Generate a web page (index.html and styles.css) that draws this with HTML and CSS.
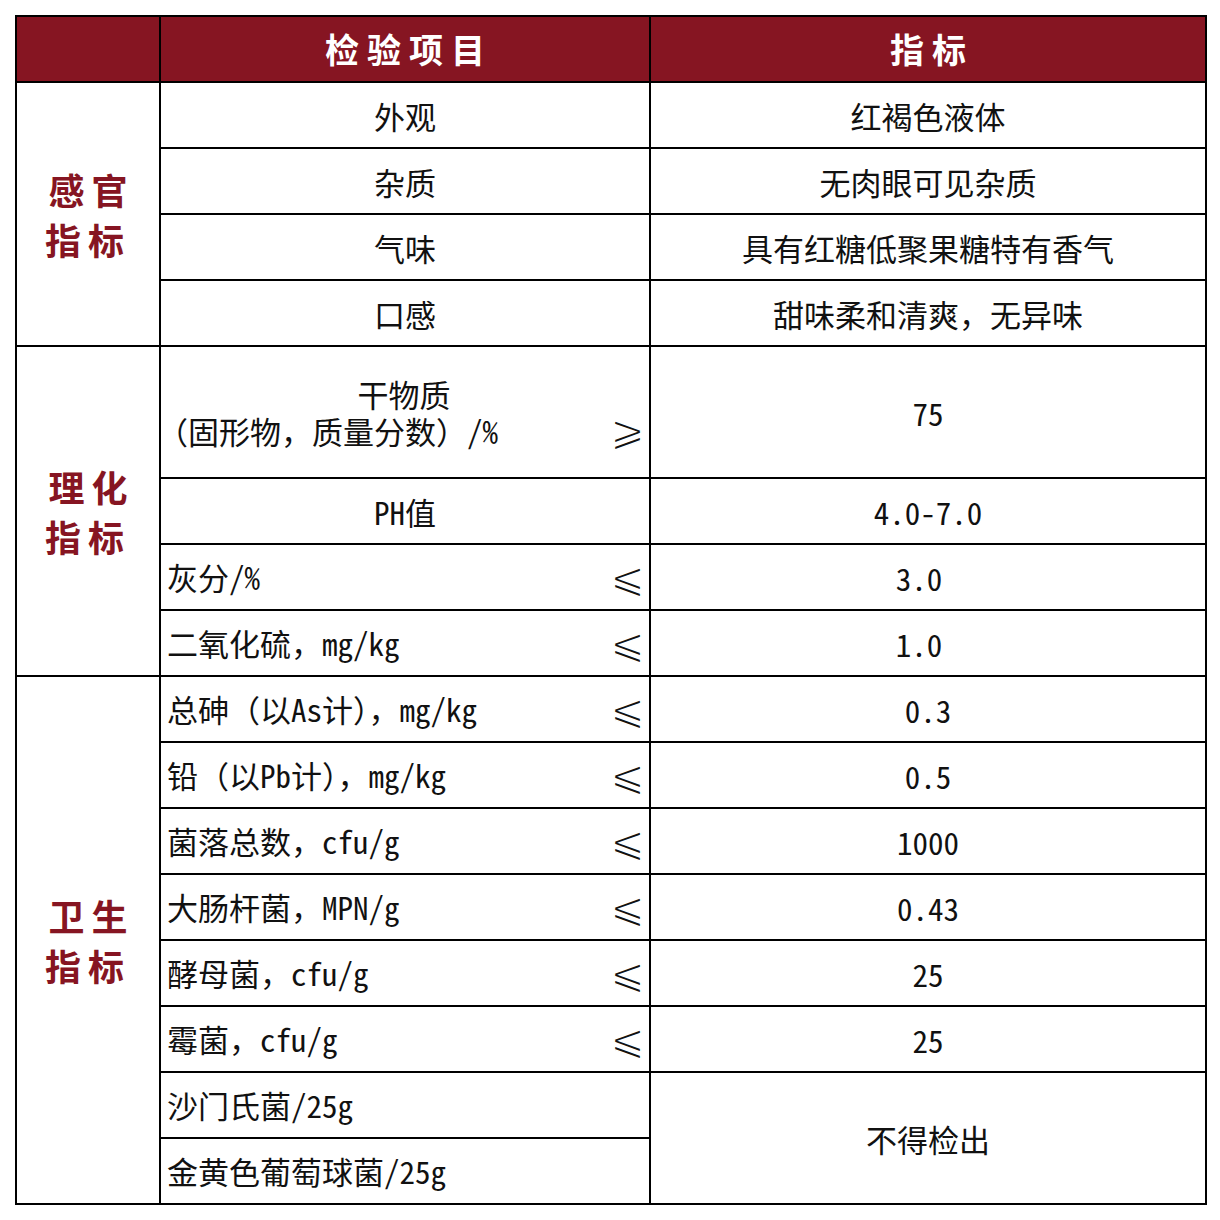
FILE: index.html
```html
<!DOCTYPE html>
<html lang="zh-CN">
<head>
<meta charset="utf-8">
<title>检验项目</title>
<link rel="stylesheet" href="styles.css">
</head>
<body>
<table class="spec">
  <colgroup>
    <col class="c-cat">
    <col class="c-item">
    <col class="c-val">
  </colgroup>
  <thead>
    <tr class="row">
      <th></th>
      <th>检验项目</th>
      <th>指标</th>
    </tr>
  </thead>
  <tbody>
    <tr class="row">
      <td class="cat" rowspan="4">感官<br>指标</td>
      <td class="center">外观</td>
      <td class="center">红褐色液体</td>
    </tr>
    <tr class="row">
      <td class="center">杂质</td>
      <td class="center">无肉眼可见杂质</td>
    </tr>
    <tr class="row">
      <td class="center">气味</td>
      <td class="center">具有红糖低聚果糖特有香气</td>
    </tr>
    <tr class="row">
      <td class="center">口感</td>
      <td class="center">甜味柔和清爽，无异味</td>
    </tr>

    <tr class="row tall">
      <td class="cat" rowspan="4">理化<br>指标</td>
      <td class="item">
        <div class="line1">干物质</div>
        <div class="split"><span class="lead">（固形物，质量分数）/%</span><span class="op">⩾</span></div>
      </td>
      <td class="center">75</td>
    </tr>
    <tr class="row">
      <td class="center">PH值</td>
      <td class="center">4.0-7.0</td>
    </tr>
    <tr class="row">
      <td class="item"><div class="split"><span>灰分/%</span><span class="op">⩽</span></div></td>
      <td class="center shift">3.0</td>
    </tr>
    <tr class="row">
      <td class="item"><div class="split"><span>二氧化硫，mg/kg</span><span class="op">⩽</span></div></td>
      <td class="center shift">1.0</td>
    </tr>

    <tr class="row">
      <td class="cat" rowspan="8">卫生<br>指标</td>
      <td class="item"><div class="split"><span>总砷（以As计），mg/kg</span><span class="op">⩽</span></div></td>
      <td class="center">0.3</td>
    </tr>
    <tr class="row">
      <td class="item"><div class="split"><span>铅（以Pb计），mg/kg</span><span class="op">⩽</span></div></td>
      <td class="center">0.5</td>
    </tr>
    <tr class="row">
      <td class="item"><div class="split"><span>菌落总数，cfu/g</span><span class="op">⩽</span></div></td>
      <td class="center">1000</td>
    </tr>
    <tr class="row">
      <td class="item"><div class="split"><span>大肠杆菌，MPN/g</span><span class="op">⩽</span></div></td>
      <td class="center">0.43</td>
    </tr>
    <tr class="row">
      <td class="item"><div class="split"><span>酵母菌，cfu/g</span><span class="op">⩽</span></div></td>
      <td class="center">25</td>
    </tr>
    <tr class="row">
      <td class="item"><div class="split"><span>霉菌，cfu/g</span><span class="op">⩽</span></div></td>
      <td class="center">25</td>
    </tr>
    <tr class="row">
      <td class="item"><div class="split"><span>沙门氏菌/25g</span></div></td>
      <td class="center" rowspan="2">不得检出</td>
    </tr>
    <tr class="row">
      <td class="item"><div class="split"><span>金黄色葡萄球菌/25g</span></div></td>
    </tr>
  </tbody>
</table>
</body>
</html>
```

FILE: styles.css
```css
html, body {
  margin: 0;
  padding: 0;
  background: #ffffff;
}

body {
  padding: 15px 0 0 15px;
  font-family: "Noto Sans Mono CJK SC", "Noto Sans CJK SC", "DejaVu Sans", sans-serif;
  color: #111111;
}

.spec {
  border-collapse: collapse;
  table-layout: fixed;
  width: 1190px;
  border: 2px solid #000;
}

.c-cat { width: 144px; }
.c-item { width: 490px; }
.c-val { width: 556px; }

.spec th,
.spec td {
  border: 2px solid #000;
  padding: 0;
  vertical-align: middle;
}

.row { height: 66px; }
.row.tall { height: 132px; }

.spec th {
  background: #861522;
  color: #ffffff;
  font-family: "Noto Sans CJK SC", sans-serif;
  font-weight: 700;
  font-size: 34px;
  letter-spacing: 8px;
  text-indent: 8px;
  line-height: 1;
  text-align: center;
}

.spec td.cat {
  color: #861522;
  font-family: "Noto Sans CJK SC", sans-serif;
  font-weight: 700;
  font-size: 36px;
  letter-spacing: 7px;
  text-indent: 7px;
  line-height: 50px;
  text-align: center;
}

.spec td.center {
  text-align: center;
  font-size: 31px;
  line-height: 1;
}

.spec td.shift { padding-right: 18px; }

.spec td.item {
  font-size: 31px;
  line-height: 1.2;
  padding: 0 4px 0 6px;
}

.line1 {
  text-align: center;
  padding-right: 4px;
}

.split {
  display: flex;
  justify-content: space-between;
  align-items: center;
}

.lead { margin-left: -10px; }

.op {
  font-family: "DejaVu Sans", sans-serif;
  font-size: 42px;
  line-height: 37px;
  color: #111111;
  -webkit-text-stroke: 1.4px #ffffff;
  paint-order: fill stroke;
}
```
